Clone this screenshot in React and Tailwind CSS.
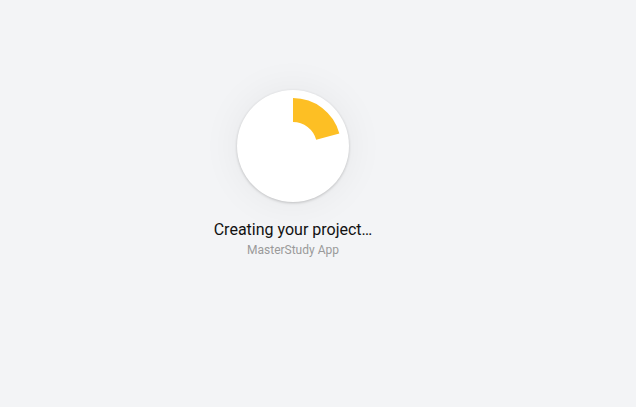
import React from "react";

const Spinner = () => (
  <div className="w-[112px] h-[112px] rounded-full bg-white shadow-[0_1px_3px_rgba(0,0,0,0.2),0_0_40px_rgba(0,0,0,0.06)]">
    <svg width="112" height="112" viewBox="0 0 112 112">
      <path
        d="M56 8 A48 48 0 0 1 102.36 43.58 L79.18 49.79 A24 24 0 0 0 56 32 Z"
        fill="#fdbf24"
      />
    </svg>
  </div>
);

export default function App() {
  return (
    <div
      className="w-full min-h-[407px] bg-[#f3f4f6] flex justify-center pr-[50px] pt-[90px]"
      style={{ fontFamily: "Roboto, 'Liberation Sans', sans-serif" }}
    >
      <div className="flex flex-col items-center">
        <Spinner />
        <p className="mt-4 text-[16px] leading-6 text-[#111]">
          Creating your project…
        </p>
        <p className="text-[12px] leading-4 text-[#9a9a9a]">
          MasterStudy App
        </p>
      </div>
    </div>
  );
}
